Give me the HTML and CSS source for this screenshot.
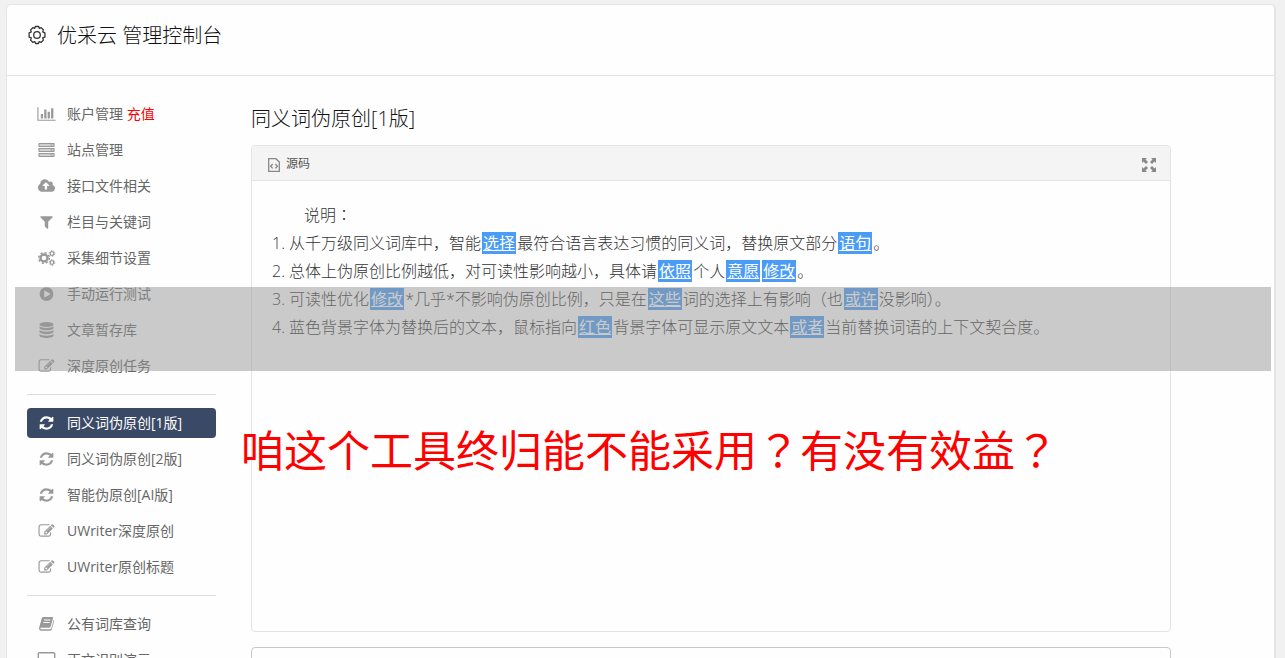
FILE: index.html
```html
<!DOCTYPE html>
<html lang="zh-CN">
<head>
<meta charset="utf-8">
<title>优采云 管理控制台</title>
<link rel="stylesheet" href="styles.css">
</head>
<body>
<svg class="sprite" aria-hidden="true">
  <symbol id="i-chart" viewBox="0 0 2048 1792"><path d="M640 896v512h-256v-512h256zm384-512v1024h-256v-1024h256zm1024 1152v128h-2048v-1536h128v1408h1920zm-640-896v768h-256v-768h256zm384-384v1152h-256v-1152h256z"/></symbol>
  <symbol id="i-server" viewBox="0 0 18 16"><path opacity=".45" d="M1 1h16v4H1zM1 6h16v4H1zM1 11h16v4H1z"/><path fill="none" stroke="currentColor" d="M1.500 1.500h15v3h-15zM1.500 6.500h15v3h-15zM1.500 11.500h15v3h-15z"/><path d="M13 2.500h2v1h-2zM13 7.500h2v1h-2zM13 12.500h2v1h-2z"/></symbol>
  <symbol id="i-cloud" viewBox="0 0 1920 1792"><path d="M1280 864q0-14-9-23l-352-352q-9-9-23-9t-23 9l-351 351q-10 12-10 24 0 14 9 23t23 9h224v352q0 13 9.500 22.500t22.500 9.500h192q13 0 22.500-9.500t9.500-22.500v-352h224q13 0 22.500-9.500t9.500-22.500zm640 288q0 159-112.500 271.500t-271.500 112.500h-1088q-185 0-316.500-131.500t-131.500-316.500q0-130 70-240t188-165q-2-30-2-43 0-212 150-362t362-150q156 0 285.500 87t188.500 231q71-62 166-62 106 0 181 75t75 181q0 76-41 138 130 31 213.500 135.500t83.500 238.500z"/></symbol>
  <symbol id="i-filter" viewBox="0 0 1792 1792"><path d="M1595 295q17 41-14 70l-493 493v742q0 42-39 59-13 5-25 5-27 0-45-19l-256-256q-19-19-19-45v-486l-493-493q-31-29-14-70 17-39 59-39h1280q42 0 59 39z"/></symbol>
  <symbol id="i-cogs" viewBox="0 0 18 16"><g fill="none" stroke="currentColor"><circle cx="6.500" cy="8" r="3.500" stroke-width="2.400"/><circle cx="6.500" cy="8" r="5.300" stroke-width="1.500" stroke-dasharray="2.080 2.080"/><circle cx="14.500" cy="3.500" r="1.800" stroke-width="1.200"/><circle cx="14.500" cy="3.500" r="2.800" stroke-width="1" stroke-dasharray="1.460 1.460"/><circle cx="14.500" cy="12.500" r="1.800" stroke-width="1.200"/><circle cx="14.500" cy="12.500" r="2.800" stroke-width="1" stroke-dasharray="1.460 1.460"/></g></symbol>
  <symbol id="i-play" viewBox="0 0 1792 1792"><path d="M896 128q209 0 385.500 103t279.500 279.500 103 385.500-103 385.500-279.500 279.500-385.500 103-385.500-103-279.500-279.500-103-385.500 103-385.500 279.500-279.500 385.500-103zm384 823q32-18 32-55t-32-55l-544-320q-31-19-64-1-32 19-32 56v640q0 37 32 56 16 8 32 8 17 0 32-9z"/></symbol>
  <symbol id="i-db" viewBox="0 0 16 16"><ellipse cx="8" cy="2.500" rx="7" ry="2.500"/><path d="M1 4.300c2 2.300 12 2.300 14 0v2c-1 2.700-13 2.700-14 0zM1 8.100c2 2.300 12 2.300 14 0v2c-1 2.700-13 2.700-14 0zM1 11.900c2 2.300 12 2.300 14 0v1.900c-1 2.900-13 2.900-14 0z"/></symbol>
  <symbol id="i-edit" viewBox="0 0 1792 1792"><path d="M888 1184l116-116-152-152-116 116v56h96v96h56zm440-720q-16-16-33 1l-350 350q-17 17-1 33t33-1l350-350q17-17 1-33zm80 594v190q0 119-84.500 203.500t-203.500 84.500h-832q-119 0-203.500-84.500t-84.500-203.500v-832q0-119 84.500-203.500t203.500-84.500h832q63 0 117 25 15 7 18 23 3 17-9 29l-49 49q-14 14-32 8-23-6-45-6h-832q-66 0-113 47t-47 113v832q0 66 47 113t113 47h832q66 0 113-47t47-113v-126q0-13 9-22l64-64q15-15 35-7t20 29zm-96-738l288 288-672 672h-288v-288zm444 132l-92 92-288-288 92-92q28-28 68-28t68 28l152 152q28 28 28 68t-28 68z"/></symbol>
  <symbol id="i-refresh" viewBox="0 0 1792 1792"><path d="M1639 1056q0 5-1 7-64 268-268 434.500t-478 166.500q-146 0-282.500-55t-243.500-157l-129 129q-19 19-45 19t-45-19-19-45v-448q0-26 19-45t45-19h448q26 0 45 19t19 45-19 45l-137 137q71 66 161 102t187 36q134 0 250-65t186-179q11-17 53-117 8-23 30-23h192q13 0 22.500 9.500t9.500 22.500zm25-800v448q0 26-19 45t-45 19h-448q-26 0-45-19t-19-45 19-45l138-138q-148-137-349-137-134 0-250 65t-186 179q-11 17-53 117-8 23-30 23h-199q-13 0-22.500-9.500t-9.500-22.500v-7q65-268 270-434.500t480-166.500q146 0 284 55.500t245 156.500l130-129q19-19 45-19t45 19 19 45z"/></symbol>
  <symbol id="i-book" viewBox="0 0 16 16"><path fill-rule="evenodd" d="M5 1h8.500c.8 0 1.200.6 1 1.300l-2.300 8.200c-.2.700-.8 1.200-1.500 1.200H2.500c-.9 0-.9 1.500.2 1.500h9c.5 0 .8-.3 1-.8L15.200 4c.5.300.6.700.4 1.200l-2.400 8.200c-.2.800-.9 1.400-1.700 1.400H2.700C1.200 14.800 0 13.200.600 11.800L3.200 2.500C3.500 1.600 4.100 1 5 1zM5.700 3.500l-.3 1h6.300l.3-1zM5 6l-.3 1H11l.3-1z"/></symbol>
  <symbol id="i-screen" viewBox="0 0 18 16"><rect x=".8" y=".8" width="16.400" height="12" rx="1" fill="none" stroke="currentColor" stroke-width="1.400"/><path d="M6 14h6v1.500H6z"/></symbol>
</svg>

<div class="card">
  <header class="card-head">
    <svg class="gear" viewBox="0 0 20 20" aria-hidden="true"><g fill="none" stroke="currentColor" stroke-width="1.300" stroke-linejoin="round"><path d="M8.300 1.500h3.400l.6 1.900 1.900-.7 2.200 2.200-.7 2 2.200.9v4.400l-2.200.7.7 2.200-2.200 2.200-2-.7-.8 1.900H8.600l-.8-1.900-2 .7-2.200-2.200.7-2.200-2.200-.7V7.800l2.200-.9-.7-2 2.200-2.200 1.900.7z"/><circle cx="10" cy="10" r="3.300"/></g></svg>
    <h1>优采云 管理控制台</h1>
  </header>
  <div class="columns">
    <nav class="menu">
      <a href="#"><svg><use href="#i-chart"/></svg><span>账户管理 <em>充值</em></span></a>
      <a href="#"><svg><use href="#i-server"/></svg><span>站点管理</span></a>
      <a href="#"><svg><use href="#i-cloud"/></svg><span>接口文件相关</span></a>
      <a href="#"><svg><use href="#i-filter"/></svg><span>栏目与关键词</span></a>
      <a href="#"><svg><use href="#i-cogs"/></svg><span>采集细节设置</span></a>
      <a href="#"><svg><use href="#i-play"/></svg><span>手动运行测试</span></a>
      <a href="#"><svg><use href="#i-db"/></svg><span>文章暂存库</span></a>
      <a href="#"><svg><use href="#i-edit"/></svg><span>深度原创任务</span></a>
      <hr>
      <a href="#" class="active" aria-current="page"><svg><use href="#i-refresh"/></svg><span>同义词伪原创[1版]</span></a>
      <a href="#"><svg><use href="#i-refresh"/></svg><span>同义词伪原创[2版]</span></a>
      <a href="#"><svg><use href="#i-refresh"/></svg><span>智能伪原创[AI版]</span></a>
      <a href="#"><svg><use href="#i-edit"/></svg><span>UWriter深度原创</span></a>
      <a href="#"><svg><use href="#i-edit"/></svg><span>UWriter原创标题</span></a>
      <hr>
      <a href="#"><svg><use href="#i-book"/></svg><span>公有词库查询</span></a>
      <a href="#"><svg><use href="#i-screen"/></svg><span>正文识别演示</span></a>
    </nav>
    <main class="main">
      <h2>同义词伪原创[1版]</h2>
      <section class="editor">
        <div class="toolbar">
          <button type="button" class="tool">
            <svg class="doc" viewBox="0 0 12 14" aria-hidden="true"><g fill="none" stroke="currentColor"><path stroke-width="1.300" d="M.7.700h7.300l3.300 3.300v9.300H.7z"/><path stroke-width="1.300" d="M4.700 6 2.600 8.200l2.100 2.200M7.300 6l2.100 2.200-2.100 2.200"/></g></svg>
            源码
          </button>
          <button type="button" class="tool" aria-label="全屏">
            <svg class="expand" viewBox="0 0 14 14" aria-hidden="true"><path d="M0 0h5L3.500 1.500 6 4 4 6 1.500 3.500 0 5zM14 0v5l-1.500-1.500L10 6 8 4l2.500-2.500L9 0zM0 14V9l1.500 1.500L4 8l2 2-2.500 2.500L5 14zM14 14H9l1.500-1.500L8 10l2-2 2.500 2.500L14 9z"/></svg>
          </button>
        </div>
        <div class="content">
          <p>说明<span class="wide" lang="zh-TW">：</span></p>
          <div>1. 从千万级同义词库中，智能<mark>选择</mark>最符合语言表达习惯的同义词，替换原文部分<mark>语句</mark>。</div>
          <div>2. 总体上伪原创比例越低，对可读性影响越小，具体请<mark>依照</mark>个人<mark>意愿</mark><mark>修改</mark>。</div>
          <div>3. 可读性优化<mark>修改</mark>*几乎*不影响伪原创比例，只是在<mark>这些</mark>词的选择上有影响（也<mark>或许</mark>没影响<span class="wide" lang="zh-TW">）</span>。</div>
          <div>4. 蓝色背景字体为替换后的文本，鼠标指向<mark>红色</mark>背景字体可显示原文文本<mark>或者</mark>当前替换词语的上下文契合度。</div>
        </div>
      </section>
      <section class="result"></section>
    </main>
  </div>
</div>
<div class="band"></div>
<div class="caption">咱这个工具终归能不能采用<span class="wide" lang="zh-TW">？</span>有没有效益<span class="wide" lang="zh-TW">？</span></div>
</body>
</html>
```
FILE: styles.css
```css
* { box-sizing: border-box; }
body {
  margin: 0;
  height: 100vh;
  overflow: hidden;
  position: relative;
  padding: 4px 9px 0 6px;
  background: #f1f1f1;
  font-family: "Open Sans", "Noto Sans CJK SC", sans-serif;
  font-size: 14px;
  color: #555;
}
.sprite { display: none; }
.card {
  min-height: 100%;
  background: #fefefe;
  border: 1px solid #e4e4e4;
  border-right-width: 2px;
  border-radius: 5px 5px 0 0;
}
.card-head {
  display: flex;
  align-items: flex-start;
  gap: 10px;
  height: 71px;
  padding: 16px 20px 0;
  border-bottom: 1px solid #e4e4e4;
  color: #333;
}
.gear { width: 20px; height: 20px; margin-top: 4px; }
h1, h2 { margin: 0; font-size: 20px; line-height: 30px; font-weight: 300; color: #111; }
.columns { display: flex; gap: 35px; padding: 23px 103px 0 20px; }
.menu { flex: 0 0 189px; display: flex; flex-direction: column; gap: 6px; }
.menu a {
  display: flex;
  align-items: center;
  gap: 11px;
  height: 30px;
  padding: 0 10px;
  border-radius: 4px;
  color: #666;
  text-decoration: none;
  white-space: nowrap;
}
.menu svg { width: 19px; height: 16px; fill: currentColor; color: #999; }
.menu span { line-height: 20px; }
.menu em { font-style: normal; color: #f00; }
.menu hr { width: 100%; height: 1px; margin: 7px 0; border: 0; background: #ddd; }
.menu .active { background: #3a4a66; color: #fff; }
.menu .active svg { color: #fff; }
.main { flex: 1; min-width: 0; }
h2 { margin: 5px 0 11px; }
.editor {
  min-height: 487px;
  border: 1px solid #e4e4e4;
  border-radius: 4px;
}
.toolbar {
  display: flex;
  justify-content: space-between;
  align-items: center;
  height: 35px;
  padding: 0 14px 0 16px;
  background: #f4f4f4;
  border-bottom: 1px solid #e4e4e4;
  border-radius: 3px 3px 0 0;
}
.tool {
  display: flex;
  align-items: center;
  gap: 6px;
  padding: 0;
  border: 0;
  background: none;
  font: 12px/18px "Noto Sans CJK SC", sans-serif;
  color: #555;
}
.tool svg { color: #888; fill: currentColor; margin-top: 3px; }
.doc { width: 12px; height: 14px; }
.expand { width: 14px; height: 14px; }
.content {
  padding: 20px;
  font-size: 16px;
  line-height: 28px;
  font-weight: 300;
  color: #333;
}
.content p { margin: 0; text-indent: 2em; }
.wide { font-family: "Noto Sans CJK TC", sans-serif; line-height: 1; }
mark {
  margin: 0 1px;
  padding: 0 1px;
  background: #4a9cf6;
  color: #fff;
  font-weight: 400;
  line-height: 1;
  text-decoration: underline;
}
.result {
  height: 200px;
  margin-top: 15px;
  border: 1px solid #c8c8c8;
  border-radius: 4px;
}
.band {
  position: absolute;
  left: 15px;
  right: 14px;
  top: 287px;
  height: 84px;
  background: rgba(150, 150, 150, 0.5);
}
.caption {
  position: absolute;
  left: 241px;
  top: 416px;
  font-size: 43px;
  line-height: 64px;
  font-family: "Noto Sans CJK SC", sans-serif;
  color: #f00;
  white-space: nowrap;
}
```
